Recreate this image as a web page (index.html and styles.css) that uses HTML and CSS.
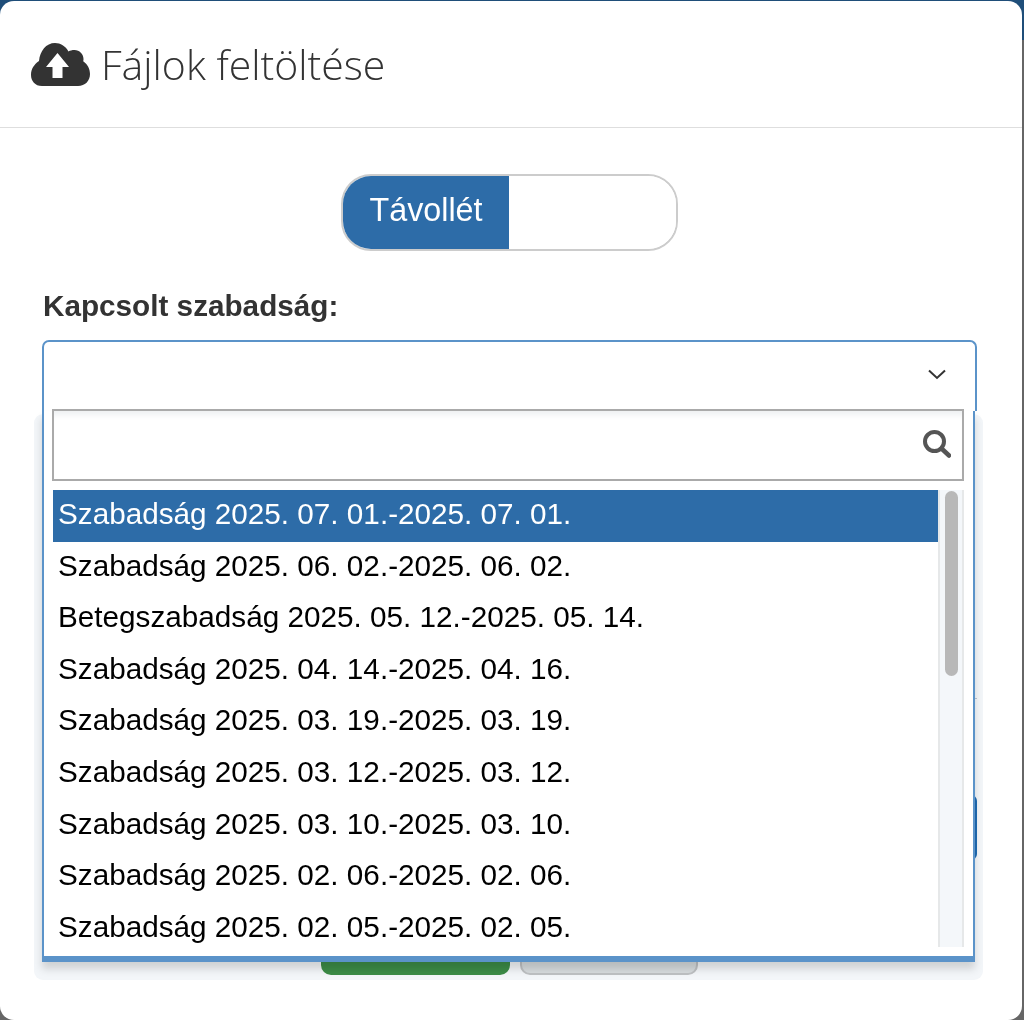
FILE: index.html
```html
<!DOCTYPE html>
<html lang="hu">
<head>
<meta charset="utf-8">
<title>Fájlok feltöltése</title>
<link rel="stylesheet" href="styles.css">
</head>
<body>
<div class="modal">
  <header class="modal-header">
    <svg class="cloud" viewBox="0 0 60 44" aria-hidden="true">
      <path fill="#333" fill-rule="evenodd" d="M11 44C4 44 0 39 0 33 0 27 3 22.500 8 19 9 9 15 1 24 1c5.500 0 10.500 3 13.500 8.500C39 8.500 41 8 43.500 8c5 0 9 4 9 9 0 .7 0 1.500-.3 2.200C56.500 22 59 27 59 32c0 7-5 12-12 12zM26.500 11 15 25h6.500v11h10V25H38z"/>
    </svg>
    <h1 class="modal-title">Fájlok feltöltése</h1>
  </header>
  <div class="modal-body">
    <div class="toggle">
      <div class="toggle-on">Távollét</div>
      <div class="toggle-off"></div>
    </div>
    <label class="field-label">Kapcsolt szabadság:</label>
    <div class="select">
      <svg class="chevron" viewBox="0 0 18 11" aria-hidden="true"><path d="M1 1.500 9 9l8-7.500" fill="none" stroke="#333" stroke-width="2"/></svg>
    </div>
    <div class="under-rule"></div>
    <div class="under-button"></div>
    <div class="footer-buttons">
      <div class="btn btn-green"></div>
      <div class="btn btn-gray"></div>
    </div>
    <div class="dropdown-halo"></div>
    <div class="dropdown">
      <div class="search">
        <svg class="search-icon" viewBox="0 0 28 28" aria-hidden="true">
          <circle cx="11.500" cy="11.500" r="9.500" fill="none" stroke="#555" stroke-width="4"/>
          <path d="M18.500 18.500 26 25.500" stroke="#555" stroke-width="4.500" stroke-linecap="round"/>
        </svg>
      </div>
      <div class="results">
        <ul class="list">
          <li class="item active">Szabadság 2025. 07. 01.-2025. 07. 01.</li>
          <li class="item">Szabadság 2025. 06. 02.-2025. 06. 02.</li>
          <li class="item">Betegszabadság 2025. 05. 12.-2025. 05. 14.</li>
          <li class="item">Szabadság 2025. 04. 14.-2025. 04. 16.</li>
          <li class="item">Szabadság 2025. 03. 19.-2025. 03. 19.</li>
          <li class="item">Szabadság 2025. 03. 12.-2025. 03. 12.</li>
          <li class="item">Szabadság 2025. 03. 10.-2025. 03. 10.</li>
          <li class="item">Szabadság 2025. 02. 06.-2025. 02. 06.</li>
          <li class="item">Szabadság 2025. 02. 05.-2025. 02. 05.</li>
        </ul>
        <div class="scrollbar"><div class="thumb"></div></div>
      </div>
    </div>
  </div>
</div>
</body>
</html>
```
FILE: styles.css
```css
* { box-sizing: border-box; }
html, body { height: 100%; }
body {
  margin: 0;
  overflow: hidden;
  background: linear-gradient(#1f4e79 0, #1f4e79 40px, #666 40px);
  font-family: "Liberation Sans", Arial, sans-serif;
  color: #000;
}
.modal {
  width: 1022px;
  height: 1019px;
  margin-top: 1px;
  background: #fff;
  border-radius: 14px;
  overflow: hidden;
}
.modal-header {
  height: 127px;
  border-bottom: 1px solid #dedede;
  display: flex;
  align-items: center;
  gap: 10px;
  padding: 0 0 0 31px;
}
.cloud { width: 60px; height: 44px; flex: none; }
.modal-title {
  margin: 2px 0 0;
  font: 300 41px/1.2 "Open Sans", sans-serif;
  color: #333;
}
.modal-body {
  position: relative;
  padding: 46px 45px 0 42px;
  height: 892px;
}
.toggle {
  width: 337px;
  height: 77px;
  margin: 0 auto 0 299px;
  display: flex;
  border: 2px solid #ccc;
  border-radius: 30px;
  overflow: hidden;
}
.toggle-on {
  width: 166px;
  background: #2d6ca8;
  color: #fff;
  font-size: 32.300px;
  line-height: 68px;
  text-align: center;
}
.toggle-off { flex: 1; background: #fff; }
.field-label {
  display: block;
  margin: 40px 0 19px 1px;
  font-size: 29.700px;
  line-height: 30px;
  font-weight: 700;
  color: #333;
  white-space: nowrap;
}
.select {
  height: 71px;
  width: 935px;
  border: solid #5b93c9;
  border-width: 2px 2px 0;
  border-radius: 7px 7px 0 0;
  display: flex;
  justify-content: flex-end;
  padding: 27px 29px 0 0;
}
.chevron { width: 18px; height: 11px; }
.under-rule {
  height: 1px;
  margin-top: 287px;
  background: #c4ccd6;
}
.under-button {
  width: 100%;
  height: 65px;
  margin-top: 96px;
  background: #1f6fb8;
  border-radius: 6px;
}
.footer-buttons {
  display: flex;
  gap: 10px;
  margin: 50px 0 0 279px;
}
.btn { height: 65px; border-radius: 10px; }
.btn-green { width: 189px; background: #3f9148; }
.btn-gray { width: 178px; background: #e2e4e4; border: 2px solid #c8c8c8; }
.dropdown-halo {
  position: absolute;
  left: 34px;
  top: 286px;
  width: 949px;
  height: 566px;
  background: #f3f6f9;
  mix-blend-mode: multiply;
  border-radius: 9px;
}
.dropdown {
  position: absolute;
  left: 42px;
  top: 283px;
  width: 933px;
  height: 551px;
  background: #fff;
  border: solid #5b93c9;
  border-width: 0 2px 6px;
  box-shadow: 0 7px 8px rgba(0, 0, 0, .15);
  padding: 0 10px 0 8px;
}
.search {
  position: relative;
  height: 72px;
  margin-top: -2px;
  border: 2px solid #aaa;
  box-shadow: inset 0 8px 6px -4px #eef0f2;
  width: 912px;
}
.search-icon {
  position: absolute;
  right: 11px;
  top: 19px;
  width: 28px;
  height: 28px;
}
.results {
  display: flex;
  margin: 9px 0 0 1px;
  height: 457px;
  width: 911px;
  overflow: hidden;
}
.list {
  list-style: none;
  margin: 0;
  padding: 0;
  flex: 1;
}
.item {
  height: 51.600px;
  line-height: 48px;
  padding-left: 5px;
  font-size: 29.700px;
  white-space: nowrap;
}
.item.active { background: #2d6ca8; color: #fff; }
.scrollbar {
  width: 26px;
  background: #f4f7fa;
  border: solid #e6e8e9;
  border-width: 0 2px;
  padding: 1px 4px 0 5px;
}
.thumb {
  height: 185px;
  background: #b8b8b8;
  border-radius: 7px;
}
```
